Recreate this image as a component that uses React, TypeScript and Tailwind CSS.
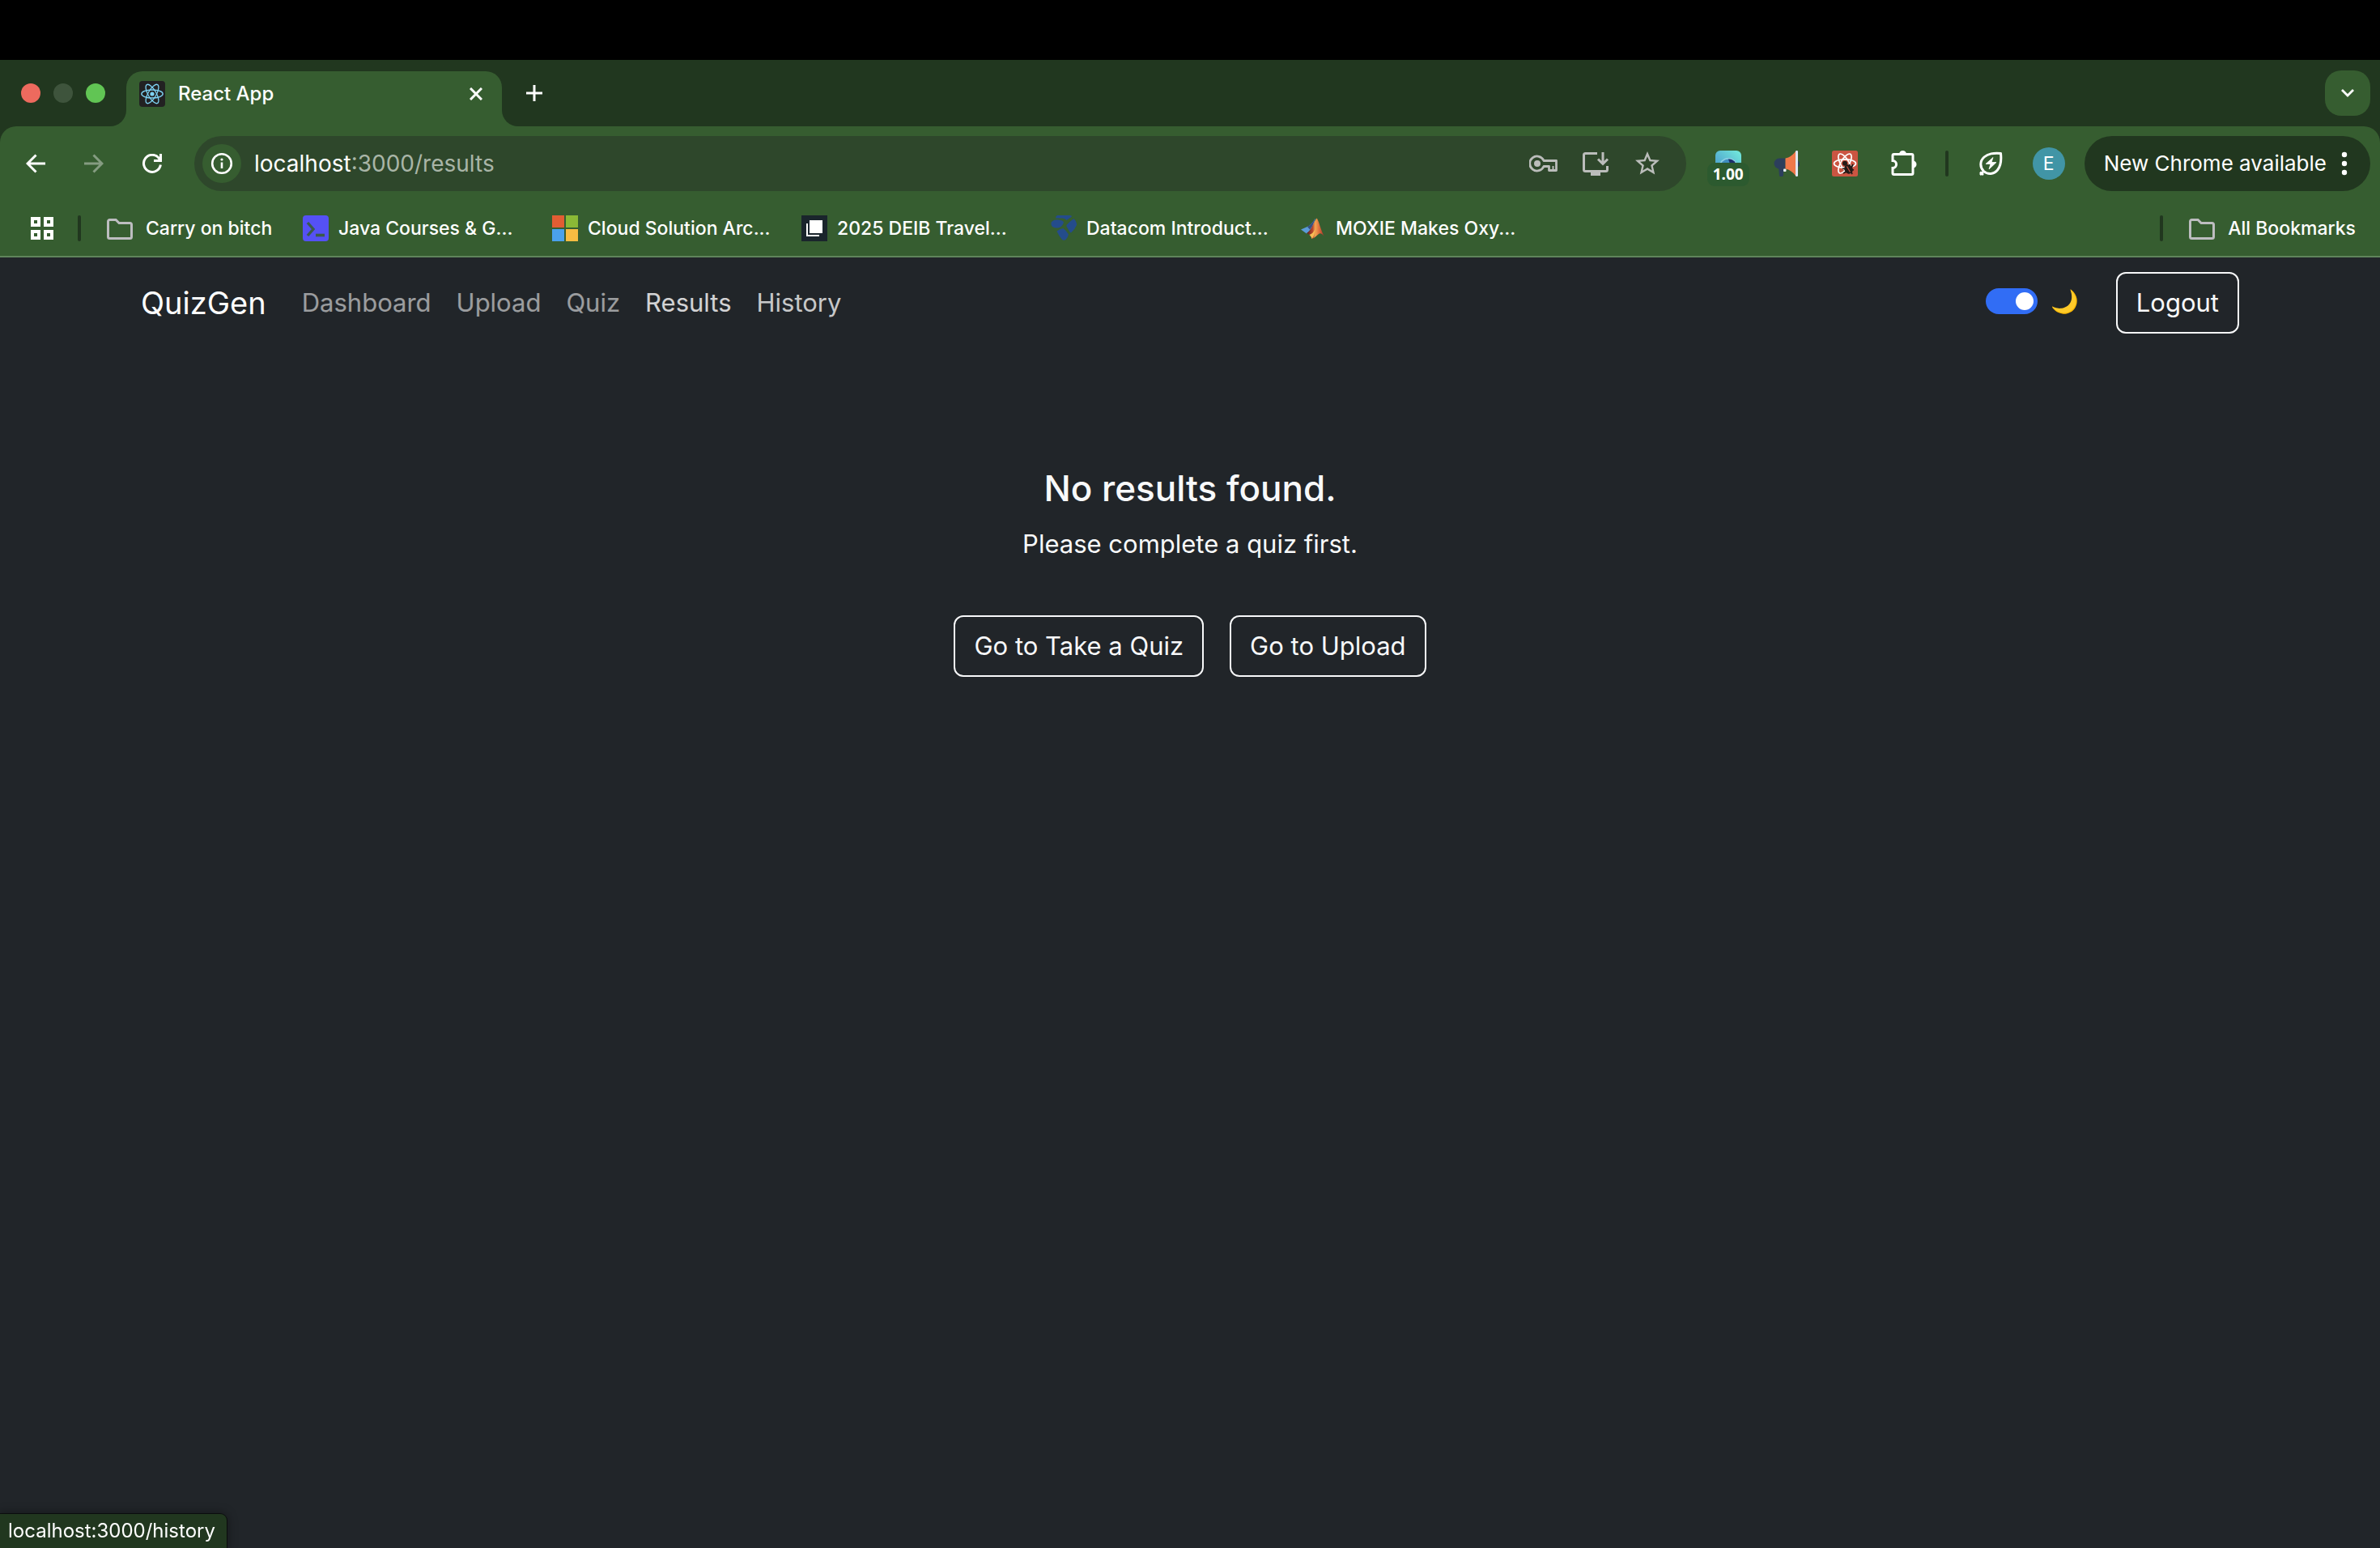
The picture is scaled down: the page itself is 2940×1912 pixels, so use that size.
import type { ReactNode } from "react";

type IconProps = { children: ReactNode; box: string; className: string };

function Icon({ children, box, className }: IconProps) {
  return (
    <svg viewBox={box} className={className} fill="none" stroke="currentColor" aria-hidden="true">
      {children}
    </svg>
  );
}

function ReactFavicon() {
  return (
    <span className="grid size-8 place-items-center rounded-sm bg-[#222122] text-[#7ed3f4]">
      <Icon box="0 0 32 32" className="size-8">
        <circle cx="16" cy="16" r="2.6" fill="currentColor" stroke="none" />
        <ellipse cx="16" cy="16" rx="13.2" ry="5" strokeWidth="1.3" />
        <ellipse cx="16" cy="16" rx="13.2" ry="5" strokeWidth="1.3" transform="rotate(60 16 16)" />
        <ellipse cx="16" cy="16" rx="13.2" ry="5" strokeWidth="1.3" transform="rotate(120 16 16)" />
      </Icon>
    </span>
  );
}

function FolderIcon() {
  return (
    <Icon box="0 0 32 32" className="size-8 shrink-0 text-[#bdbdc0]">
      <path d="M3.5 5.5h7.6l4 4h13.4a2 2 0 0 1 2 2v15a2 2 0 0 1-2 2h-25a2 2 0 0 1-2-2v-19a2 2 0 0 1 2-2z" strokeWidth="3" />
    </Icon>
  );
}

function TerminalIcon() {
  return (
    <svg viewBox="0 0 32 32" className="size-8 shrink-0" aria-hidden="true">
      <rect width="32" height="32" rx="4" fill="#5551f5" />
      <path d="M6 9l7 8-7 8" fill="none" stroke="#3b5b4a" strokeWidth="3.4" />
      <path d="M16 24.5h11" stroke="#3b5b4a" strokeWidth="3.6" />
    </svg>
  );
}

function WindowsIcon() {
  return (
    <svg viewBox="0 0 32 32" className="size-8 shrink-0" aria-hidden="true">
      <path d="M0 0h15v15H0z" fill="#e25d33" />
      <path d="M17 0h15v15H17z" fill="#8bb936" />
      <path d="M0 17h15v15H0z" fill="#4aa1ec" />
      <path d="M17 17h15v15H17z" fill="#f7bc42" />
    </svg>
  );
}

function PagesIcon() {
  return (
    <svg viewBox="0 0 32 32" className="size-8 shrink-0" aria-hidden="true">
      <rect width="32" height="32" fill="#1a252c" />
      <rect x="10" y="6" width="16" height="16" fill="#fff" />
      <path d="M7 10v15h15" fill="none" stroke="#fff" strokeWidth="2" />
    </svg>
  );
}

function DatacomIcon() {
  return (
    <svg viewBox="0 0 32 32" className="size-8 shrink-0" fill="#244c8b" aria-hidden="true">
      <path d="M8 0h16q2 0 2 1.5l-6.5 4.5q-2-2.5-5-2.5H6q0-3 2-3.5z" />
      <path d="M1 8q3-3.500 9-2.500 5 .5 6 3-1 4-5 6.500-5 1.500-9-1-2.500-3-1-6z" />
      <path d="M28.5 4q4 4 3.5 8-2 5-7 9.5-1 0-3-3.5l-2-3.5q-1-1-.5-2.500 4-4.500 9-8z" />
      <path d="M7.5 19.5q4-3.500 8-3.500 4 3 6.500 7.500-1 4-3.500 6.500-2.500 1.500-4.500 0-4-4.500-6.500-10.500z" />
    </svg>
  );
}

function MatlabIcon() {
  return (
    <svg viewBox="0 0 32 32" className="size-8 shrink-0" aria-hidden="true">
      <defs>
        <linearGradient id="peak" x1="0" x2="1">
          <stop offset="0" stopColor="#5a1a1c" />
          <stop offset="0.35" stopColor="#b9472d" />
          <stop offset="0.5" stopColor="#f3a552" />
          <stop offset="0.7" stopColor="#e0743f" />
          <stop offset="1" stopColor="#a82f28" />
        </linearGradient>
      </defs>
      <path d="M1 17.5l8-3.500c4-2 7-6 10-10.500l-3 11-8 8z" fill="#5b9bd8" />
      <path d="M9 14c4-2 7-6 10-10.500l-4 10-3 4z" fill="#35507f" />
      <path d="M8 22c5-2 8-12 12.500-18.500C23 6 25.500 18 29.500 25.500c-3-3-4.500-4-6.500-2.500-3 2-5 5-8.500 6-.5-3-3-6-6.500-7z" fill="url(#peak)" />
      <path d="M11.5 24c3-1 5-3 7-7-.5 5-1 9-4 12-.5-2-1.500-3.500-3-5z" fill="#f6bd55" />
    </svg>
  );
}

function ShutterExtension() {
  return (
    <span className="relative block size-8">
      <svg viewBox="0 0 32 32" className="size-8" aria-hidden="true">
        <defs>
          <linearGradient id="sky" x1="0" y1="1" x2="1" y2="0">
            <stop offset="0.3" stopColor="#52a9cf" />
            <stop offset="1" stopColor="#74ecdc" />
          </linearGradient>
        </defs>
        <rect width="32" height="32" rx="6" fill="url(#sky)" />
        <circle cx="16" cy="20.5" r="11.5" fill="#8fd0e4" />
        <circle cx="16" cy="20.5" r="10" fill="#3f8ec0" />
        <path d="M16 10.5a10 10 0 0 1 9 5l-7 1z" fill="#1d2f6b" />
      </svg>
      <span className="absolute -left-[10px] top-[15px] grid h-[29px] w-[52px] place-items-center rounded-[9px] bg-[#2c5a2f] font-['Noto_Sans'] text-[19px] font-bold leading-none text-white">
        1.00
      </span>
    </span>
  );
}

function MegaphoneExtension() {
  return (
    <svg viewBox="0 0 32 32" className="size-8" aria-hidden="true">
      <path d="M29 13h1.500q1.500 1 1.500 3.500t-1.500 3.500H29z" fill="#2c3e5c" />
      <path d="M7 9.500h7.500v13H7A6.500 6.500 0 0 1 7 9.500z" fill="#2c3e5c" />
      <path d="M6 20h6v10q0 2-1.500 2H8.500Q7 32 7 30.500z" fill="#2c3e5c" />
      <rect x="12" y="22.5" width="3.5" height="3.5" rx="1" fill="#e8eef5" />
      <path d="M14.5 9.500Q22 8 27 1v30q-5-7-12.500-8.500z" fill="#f0784a" />
      <rect x="27" y="0" width="3" height="32" rx="1.2" fill="#dfe6f2" />
    </svg>
  );
}

function ReactBugExtension() {
  return (
    <svg viewBox="0 0 32 32" className="size-8" aria-hidden="true">
      <rect width="32" height="32" rx="2.5" fill="#cb5542" />
      <g fill="none" stroke="#fff" strokeWidth="1.7">
        <ellipse cx="16" cy="16" rx="13.5" ry="5.2" />
        <ellipse cx="16" cy="16" rx="13.5" ry="5.2" transform="rotate(60 16 16)" />
        <ellipse cx="16" cy="16" rx="13.5" ry="5.2" transform="rotate(120 16 16)" />
      </g>
      <path d="M16 21l9-2 2 8-10 3z" fill="#cb5542" />
      <circle cx="16" cy="15.8" r="3" fill="#231a18" />
      <g stroke="#231a18" strokeWidth="1.8">
        <path d="M13 22l4 1M14 28l4-2M22 17l-1 4M26 17l-2 4M27 24l-4-1M25 29l-2-4" />
      </g>
      <ellipse cx="20.5" cy="23" rx="5" ry="6" fill="#231a18" transform="rotate(-32 20.5 23)" />
      <path d="M18.5 19.5l4 7" stroke="#cb5542" strokeWidth="1.2" />
    </svg>
  );
}

function IconButton({ label, children }: { label: string; children: ReactNode }) {
  return (
    <button type="button" aria-label={label} className="grid size-14 shrink-0 place-items-center rounded-full">
      {children}
    </button>
  );
}

function TabStrip() {
  return (
    <div className="flex h-[82px] bg-[#365d30]">
      <div className="flex w-[156px] items-center gap-4 rounded-br-[20px] bg-[#21371f] pl-[26px]">
        <button type="button" aria-label="Close window" className="size-6 rounded-full bg-[#ed6a5e]" />
        <button type="button" aria-label="Minimize window" className="size-6 rounded-full bg-[#3e543c]" />
        <button type="button" aria-label="Zoom window" className="size-6 rounded-full bg-[#61c554]" />
      </div>
      <div className="w-[464px] bg-linear-to-b from-[#21371f] from-50% to-[#365d30] to-50% pt-3.5">
        <div className="h-full rounded-t-[20px] bg-[#365d30]">
          <div className="flex h-14 items-center gap-4 px-4">
            <ReactFavicon />
            <span className="flex-1 text-[24px] font-medium leading-8 text-white">React App</span>
            <button type="button" aria-label="Close tab" className="grid size-8 place-items-center text-white">
              <Icon box="0 0 16 16" className="size-4">
                <path d="M1 1l14 14M15 1L1 15" strokeWidth="3" />
              </Icon>
            </button>
          </div>
        </div>
      </div>
      <div className="flex flex-1 items-center justify-between rounded-bl-[20px] bg-[#21371f] px-3 text-white">
        <IconButton label="New tab">
          <Icon box="0 0 20 20" className="size-5">
            <path d="M10 0v20M0 10h20" strokeWidth="3" />
          </Icon>
        </IconButton>
        <button type="button" aria-label="Search tabs" className="grid size-14 place-items-center rounded-[20px] bg-[#365d30]">
          <Icon box="0 0 16 10" className="h-2.5 w-4">
            <path d="M1 1l7 7 7-7" strokeWidth="2.8" />
          </Icon>
        </button>
      </div>
    </div>
  );
}

function AddressBar() {
  return (
    <div className="ml-6 flex h-[68px] flex-1 items-center rounded-full bg-[#2e472b] pl-[10px] pr-6">
      <button type="button" aria-label="View site information" className="grid size-12 place-items-center rounded-full bg-[#365d30] text-white">
        <Icon box="0 0 28 28" className="size-7">
          <circle cx="14" cy="14" r="11.8" strokeWidth="2.6" />
          <path d="M14 12.5v7.5" strokeWidth="2.6" />
          <circle cx="14" cy="9" r="1.6" fill="currentColor" stroke="none" />
        </Icon>
      </button>
      <label htmlFor="address" className="ml-4 text-[28px] leading-9 text-white">localhost</label>
      <input
        id="address"
        type="text"
        defaultValue=":3000/results"
        className="min-w-0 flex-1 bg-transparent text-[28px] leading-9 text-[#a9b5a7] outline-none"
      />
      <div className="flex gap-4 text-[#bbbdbb]">
        <button type="button" aria-label="Manage passwords" className="grid size-12 place-items-center">
          <Icon box="0 0 36 24" className="h-6 w-9">
            <path d="M18 8.500a9 9 0 1 0 0 7h6.500v5h9v-12z" strokeWidth="2.8" strokeLinejoin="round" />
            <circle cx="10" cy="12" r="4" fill="currentColor" stroke="none" />
            <path d="M29.5 15v5" strokeWidth="2" />
          </Icon>
        </button>
        <button type="button" aria-label="Install app" className="grid size-12 place-items-center">
          <Icon box="0 0 36 36" className="size-9">
            <path d="M20 5.500H5.500a2 2 0 0 0-2 2v18a2 2 0 0 0 2 2h25a2 2 0 0 0 2-2V21" strokeWidth="3" />
            <path d="M12 28h12v5H12z" fill="currentColor" stroke="none" />
            <path d="M27 4v14M21 12.500l6 6 6-6" strokeWidth="3" />
          </Icon>
        </button>
        <button type="button" aria-label="Bookmark this tab" className="grid size-12 place-items-center">
          <Icon box="0 0 24 24" className="size-9">
            <path
              d="M22 9.24l-7.190-.62L12 2 9.190 8.630 2 9.240l5.460 4.730L5.820 21 12 17.270 18.180 21l-1.630-7.030L22 9.240zM12 15.400l-3.760 2.270 1-4.280-3.320-2.880 4.380-.38L12 6.100l1.710 4.040 4.380.38-3.320 2.880 1 4.280L12 15.400z"
              fill="currentColor"
              stroke="none"
            />
          </Icon>
        </button>
      </div>
    </div>
  );
}

function Toolbar() {
  return (
    <div className="flex items-center px-3 py-3 text-white">
      <div className="ml-1 flex gap-4">
        <IconButton label="Back">
          <Icon box="0 0 24 24" className="size-6">
            <path d="M24 12H2.500M12.500 1.500L2 12l10.500 10.500" strokeWidth="3" />
          </Icon>
        </IconButton>
        <span className="text-[#859c81]">
          <IconButton label="Forward">
            <Icon box="0 0 24 24" className="size-6">
              <path d="M0 12h21.500M11.500 1.500L22 12 11.500 22.500" strokeWidth="3" />
            </Icon>
          </IconButton>
        </span>
        <IconButton label="Reload">
          <Icon box="0 0 24 24" className="size-6">
            <path d="M22.4 13.500A10.500 10.500 0 1 1 20 5L22 8" strokeWidth="3" />
            <path d="M22.5 0v8.500H14" strokeWidth="3" />
          </Icon>
        </IconButton>
      </div>
      <AddressBar />
      <div className="ml-6 flex gap-4">
        <IconButton label="Shutter extension">
          <ShutterExtension />
        </IconButton>
        <IconButton label="Megaphone extension">
          <MegaphoneExtension />
        </IconButton>
        <IconButton label="React Developer Tools">
          <ReactBugExtension />
        </IconButton>
        <IconButton label="Extensions">
          <Icon box="0 0 36 36" className="size-9">
            <path
              d="M6.500 6.500h22q1.500 0 1.500 1.500v22q0 1.500-1.500 1.500h-22Q5 31.500 5 30v-6.500c6 0 6-9 0-9V8q0-1.500 1.500-1.500z"
              strokeWidth="3"
            />
            <path d="M13 6.500a4.500 4.500 0 0 1 9 0zM30 14.500a4.500 4.500 0 0 1 0 9z" fill="currentColor" stroke="none" />
          </Icon>
        </IconButton>
      </div>
      <span className="mx-6 h-8 w-1 rounded-full bg-[#21371f]" />
      <div className="flex items-center gap-4">
        <IconButton label="Energy saver">
          <Icon box="0 0 30 30" className="size-[30px]">
            <path d="M27.500 2.500C28.500 11 27.500 18 23.500 23 19 28.500 11.500 29 6.500 24.500 1.500 19.500 1.500 12 7 7 12 2.500 18 2 27.500 2.500z" strokeWidth="3" strokeLinejoin="round" />
            <path d="M7 24l-5 5M2 25.500l4 3.500" strokeWidth="2.6" />
            <path d="M18 7.500l-9 8h6l-2 6.500 9-8.500h-6z" fill="currentColor" strokeWidth="0.8" />
          </Icon>
        </IconButton>
        <IconButton label="Profile">
          <span className="grid size-10 place-items-center rounded-full bg-[#4195a6] text-[23px] leading-none">E</span>
        </IconButton>
        <button type="button" className="flex h-[68px] items-center gap-[18px] rounded-full bg-[#21371f] pl-6 pr-7 text-[26px] leading-8">
          New Chrome available
          <Icon box="0 0 8 32" className="h-8 w-2">
            <g fill="currentColor" stroke="none">
              <circle cx="4" cy="5" r="3.2" />
              <circle cx="4" cy="16" r="3.2" />
              <circle cx="4" cy="27" r="3.2" />
            </g>
          </Icon>
        </button>
      </div>
    </div>
  );
}

const bookmarks = [
  { title: "Java Courses & G...", icon: <TerminalIcon /> },
  { title: "Cloud Solution Arc...", icon: <WindowsIcon /> },
  { title: "2025 DEIB Travel...", icon: <PagesIcon /> },
  { title: "Datacom Introduct...", icon: <DatacomIcon /> },
  { title: "MOXIE Makes Oxy...", icon: <MatlabIcon /> },
];

function BookmarksBar() {
  return (
    <div className="flex h-[70px] items-center border-b-2 border-[#5f845b] pl-6 pr-[30px] text-[23px] font-medium leading-8 text-white">
      <IconButton label="Apps">
        <Icon box="0 0 28 28" className="size-7">
          <path d="M2 2h8v8H2zM18 2h8v8h-8zM2 18h8v8H2zM18 18h8v8h-8z" strokeWidth="4" />
        </Icon>
      </IconButton>
      <span className="ml-4 mr-8 h-8 w-1 rounded-full bg-[#21371f]" />
      <button type="button" className="flex w-[242px] items-center gap-4 whitespace-nowrap">
        <FolderIcon />
        Carry on bitch
      </button>
      {bookmarks.map((b) => (
        <a key={b.title} href="#bookmark" className="flex w-[308px] items-center gap-3 whitespace-nowrap">
          {b.icon}
          {b.title}
        </a>
      ))}
      <span className="ml-auto mr-8 h-8 w-1 rounded-full bg-[#21371f]" />
      <button type="button" className="flex items-center gap-4 whitespace-nowrap">
        <FolderIcon />
        All Bookmarks
      </button>
    </div>
  );
}

const links = [
  { label: "Dashboard", tone: "text-white/55" },
  { label: "Upload", tone: "text-white/55" },
  { label: "Quiz", tone: "text-white/55" },
  { label: "Results", tone: "text-white/80" },
  { label: "History", tone: "text-white/75" },
];

function SiteHeader() {
  return (
    <header className="mx-auto flex w-full max-w-[2640px] items-center px-6 py-[18px]">
      <a href="#home" className="mr-11 text-[38px] leading-[54px] text-white">QuizGen</a>
      <nav className="flex gap-[31px]">
        {links.map((l) => (
          <a key={l.label} href={"#" + l.label.toLowerCase()} className={l.tone}>
            {l.label}
          </a>
        ))}
      </nav>
      <div className="ml-auto flex items-center gap-[46px]">
        <div className="flex items-center gap-4 pb-1">
          <input
            id="theme"
            type="checkbox"
            role="switch"
            defaultChecked
            className="flex h-8 w-16 appearance-none items-center rounded-full bg-[#316df5] px-[5px] before:size-[22px] before:rounded-full before:bg-white checked:justify-end"
          />
          <label htmlFor="theme" className="text-[28px] leading-8" aria-label="Dark mode">🌙</label>
        </div>
        <OutlineButton>Logout</OutlineButton>
      </div>
    </header>
  );
}

function OutlineButton({ children }: { children: ReactNode }) {
  return (
    <button type="button" className="h-[76px] rounded-xl border-2 border-[#f8f9fa] px-[23px] text-[#f8f9fa]">
      {children}
    </button>
  );
}

export default function App() {
  return (
    <div className="flex min-h-screen flex-col bg-[#212529] font-['Inter',sans-serif] text-[31px] leading-[48px]">
      <div className="h-[74px] bg-black" />
      <div className="bg-[#21371f]">
        <TabStrip />
        <div className="rounded-t-[20px] bg-[#365d30]">
          <Toolbar />
          <BookmarksBar />
        </div>
      </div>
      <SiteHeader />
      <main className="flex flex-1 flex-col items-center pt-36 text-[#f8f9fa]">
        <h2 className="text-[44px] font-medium leading-[58px]">No results found.</h2>
        <p className="mt-4">Please complete a quiz first.</p>
        <div className="mt-16 flex gap-8">
          <OutlineButton>Go to Take a Quiz</OutlineButton>
          <OutlineButton>Go to Upload</OutlineButton>
        </div>
      </main>
      <div className="fixed bottom-0 left-0 flex h-[42px] items-center rounded-tr-lg bg-[#21371f] pl-[10px] pr-3.5 text-[24px] leading-8 text-white shadow-[0_0_12px_2px_rgba(0,0,0,0.35)] ring-1 ring-black/60">
        localhost:3000/history
      </div>
    </div>
  );
}
